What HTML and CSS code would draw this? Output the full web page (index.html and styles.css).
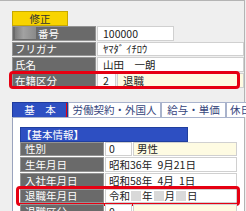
FILE: index.html
```html
<!DOCTYPE html>
<html lang="ja">
<head>
<meta charset="utf-8">
<link rel="stylesheet" href="styles.css">
</head>
<body>
<div class="frame">
  <div class="mode">修正</div>
  <div class="rows">
    <div class="row">
      <div class="lbl lbl-no"><span class="hidden-btn"></span>番号</div>
      <div class="val box">100000</div>
    </div>
    <div class="row">
      <div class="lbl">フリガナ</div>
      <div class="val wide">ﾔﾏﾀﾞ ｲﾁﾛｳ</div>
    </div>
    <div class="row">
      <div class="lbl">氏名</div>
      <div class="val wide">山田　一朗</div>
    </div>
    <div class="row mark">
      <div class="lbl">在籍区分</div>
      <div class="val code">2</div>
      <div class="val yellow">退職</div>
    </div>
  </div>
  <div class="tabs">
    <div class="tab active">基　本</div>
    <div class="tab t2">労働契約・外国人</div>
    <div class="tab t3">給与・単価</div>
    <div class="tab t4">休日</div>
  </div>
  <div class="panel">
    <div class="title">【基本情報】</div>
    <div class="rows btable">
      <div class="row">
        <div class="lbl">性別</div>
        <div class="val zero">0</div>
        <div class="val yellow">男性</div>
      </div>
      <div class="row">
        <div class="lbl">生年月日</div>
        <div class="val wide">昭和36年&ensp;9月21日</div>
      </div>
      <div class="row">
        <div class="lbl">入社年月日</div>
        <div class="val wide">昭和58年&ensp;4月&ensp;1日</div>
      </div>
      <div class="row mark2">
        <div class="lbl">退職年月日</div>
        <div class="val wide">令和<span class="blank"></span>年<span class="blank"></span>月<span class="blank"></span>日</div>
      </div>
      <div class="row">
        <div class="lbl">退職区分</div>
        <div class="val zero">0</div>
        <div class="val yellow"></div>
      </div>
    </div>
  </div>
</div>
</body>
</html>
```
FILE: styles.css
```css
* { box-sizing: border-box; }
html, body { margin: 0; padding: 0; }
body {
  width: 246px;
  height: 211px;
  overflow: hidden;
  background: #efefef;
  font-family: "Noto Sans CJK JP", "Noto Sans", sans-serif;
  font-size: 10.5px;
  line-height: 13px;
  color: #222;
}
.frame {
  width: 245px;
  height: 211px;
  border-top: 1px solid #b4b4b4;
  border-right: 1px solid #b4b4b4;
  padding: 10px 0 0 12px;
}
.mode {
  width: 56px;
  height: 15px;
  background: #f8d400;
  border: 1px solid #c7a800;
  text-align: center;
  color: #333;
}
.rows {
  display: flex;
  flex-direction: column;
  gap: 1px;
}
.row {
  display: flex;
  gap: 1px;
  height: 14.67px;
  position: relative;
}
.lbl {
  width: 84px;
  flex: none;
  background: #6a6a6a;
  border: 1px solid #939393;
  color: #fff;
  padding-left: 2px;
  display: flex;
  align-items: center;
  white-space: nowrap;
}
.lbl-no { padding-left: 2px; }
.hidden-btn {
  display: inline-block;
  width: 21px;
  height: 12px;
  margin-right: 2px;
  background: linear-gradient(to right, #7c7c7c, #a2a2a2 40%, #8a8a8a);
}
.val {
  background: #fff;
  border: 1px solid #d0d0d0;
  padding-left: 5px;
  display: flex;
  align-items: center;
  white-space: nowrap;
}
.box { width: 77px; }
.wide { flex: 1; }
.code { width: 19px; }
.yellow { flex: 1; background: #fefbe2; }
.mark::after {
  content: "";
  position: absolute;
  left: -3px;
  right: 4px;
  top: -2px;
  bottom: -1px;
  border: 3px solid #e60012;
  border-radius: 4px;
}
.tabs {
  display: flex;
  height: 15px;
  margin-top: 14px;
  position: relative;
}
.tab {
  flex: none;
  height: 15px;
  border: 1px solid #a9b3cc;
  border-bottom: none;
  background: #fff;
  color: #35457c;
  text-align: center;
  white-space: nowrap;
  overflow: hidden;
}
.tab.active {
  width: 56px;
  background: #2d4fc2;
  border-color: #1e3a9e;
  color: #fff;
  position: relative;
}
.tab.active::after {
  content: "";
  position: absolute;
  left: -5px;
  right: -2px;
  top: -4px;
  bottom: -3px;
  border: 3px solid #e60012;
  border-radius: 4px;
}
.t2 { width: 93px; }
.t3 { width: 65px; }
.t4 { width: 30px; text-align: left; padding-left: 3px; }
.panel {
  height: 120px;
  background: #fff;
  border-left: 1px solid #9aa3bd;
  border-top: 1px solid #a9b3cc;
  padding: 9px 0 0 7px;
}
.title {
  width: 168px;
  height: 15px;
  background: #2d4fc2;
  border: 1px solid #203f9e;
  color: #fff;
}
.btable { width: 217px; }
.btable .lbl { padding-left: 4px; }
.btable .val { padding-left: 3px; }
.zero { width: 27px; padding-left: 4px; }
.blank {
  display: inline-block;
  width: 10px;
  height: 10px;
  background: #d9d9d9;
  margin: 0 1px;
}
.mark2::after {
  content: "";
  position: absolute;
  left: -4px;
  right: -3px;
  top: -3px;
  bottom: -3px;
  border: 3px solid #e60012;
  border-radius: 4px;
}
```
